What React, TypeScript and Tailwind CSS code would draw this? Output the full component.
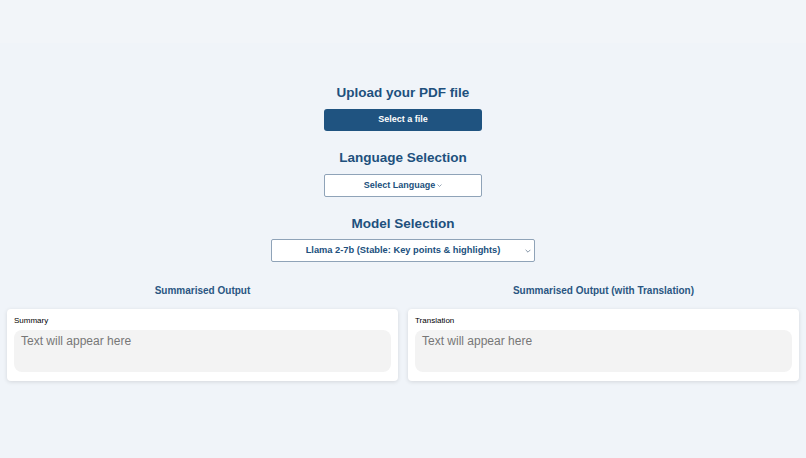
import React from "react";

function Chevron({ className }: { className?: string }) {
  return (
    <svg viewBox="0 0 10 6" className={className} fill="none" stroke="currentColor" strokeWidth="1.4">
      <path d="M1 1l4 4 4-4" />
    </svg>
  );
}

function OutputCard({ title, label }: { title: string; label: string }) {
  return (
    <div className="flex flex-1 flex-col">
      <h3 className="text-center text-[10px] font-bold leading-[14px] text-[#2a5682]">{title}</h3>
      <div className="mt-[11px] rounded-[4px] bg-white px-[7px] pt-[7px] pb-[9px] shadow-[0_1px_4px_rgba(0,0,0,0.12)]">
        <div className="text-[8px] leading-[10px] text-black">{label}</div>
        <div className="mt-[4px] h-[42px] rounded-[8px] bg-[#f3f3f3] px-[7px] pt-[2px] text-[12px] leading-[18px] text-[#777]">
          Text will appear here
        </div>
      </div>
    </div>
  );
}

export default function App() {
  return (
    <div className="min-h-[458px] bg-[#f0f4f9] font-['Liberation_Sans',Arial,sans-serif]">
      <div className="h-[43px] bg-[#f2f5f9]" />
      <div className="flex flex-col items-center">
        <h2 className="mt-[41px] text-[13.5px] font-bold leading-[18px] text-[#20507d]">Upload your PDF file</h2>
        <button className="mt-[7px] h-[22px] w-[158px] rounded-[3px] bg-[#1f5380] text-[9px] font-bold text-white">
          Select a file
        </button>
        <h2 className="mt-[18px] text-[13.5px] font-bold leading-[18px] text-[#20507d]">Language Selection</h2>
        <button className="mt-[7px] flex h-[23px] w-[158px] items-center justify-center gap-[2px] rounded-[2px] border border-[#8fa3b8] bg-white text-[9px] font-bold text-[#20507d]">
          Select Language
          <Chevron className="h-[3px] w-[5px] text-[#6f8296]" />
        </button>
        <h2 className="mt-[18px] text-[13.5px] font-bold leading-[18px] text-[#20507d]">Model Selection</h2>
        <div className="relative mt-[6px] flex h-[23px] w-[264px] items-center justify-center rounded-[2px] border border-[#8fa3b8] bg-white pt-[1px] text-[9.3px] font-bold text-[#20507d]">
          Llama 2-7b (Stable: Key points &amp; highlights)
          <Chevron className="absolute right-[3px] top-[9px] h-[4px] w-[6px] text-[#6f8296]" />
        </div>
      </div>
      <div className="mt-[22px] flex gap-[10px] px-[7px]">
        <OutputCard title="Summarised Output" label="Summary" />
        <OutputCard title="Summarised Output (with Translation)" label="Translation" />
      </div>
    </div>
  );
}
